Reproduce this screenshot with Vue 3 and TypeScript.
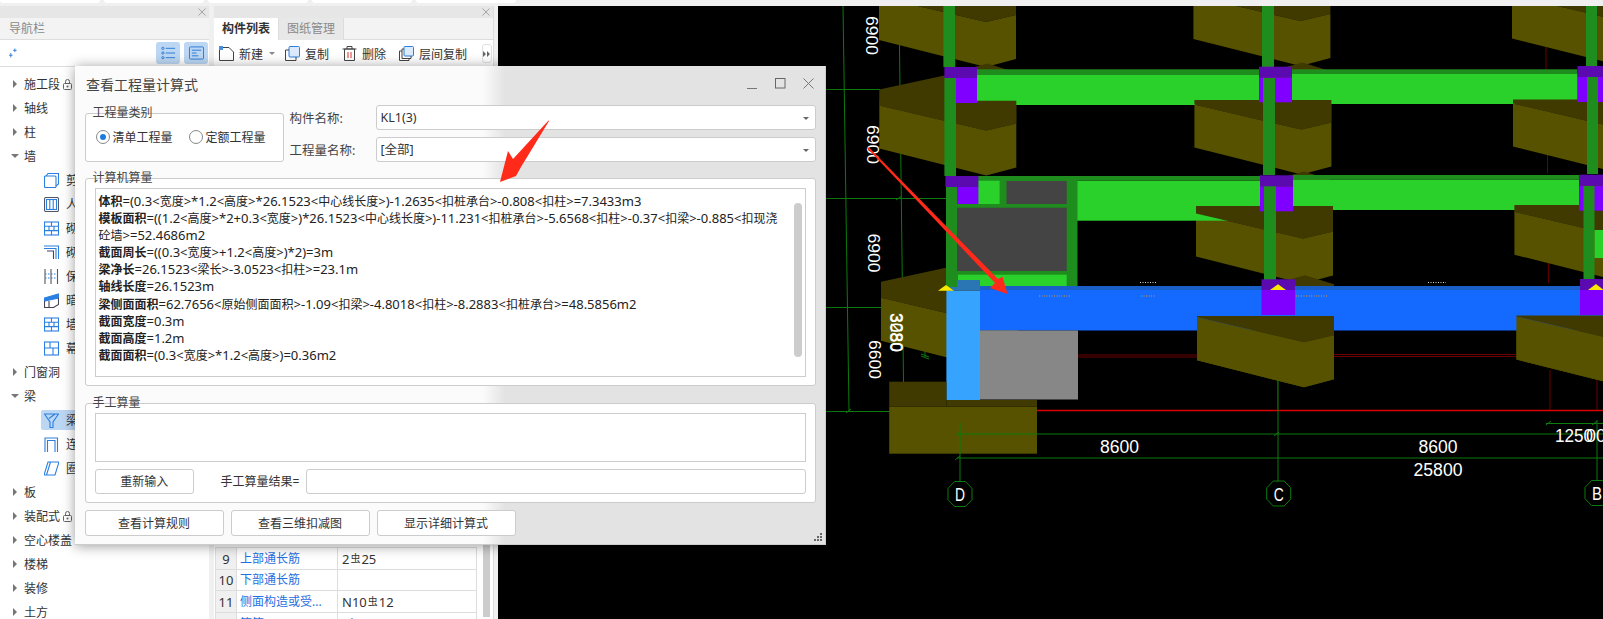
<script setup lang="ts">
interface TreeItem {
  label: string;
  level: 0 | 1;
  arrow?: "open" | "closed";
  lock?: boolean;
  icon?: string;
  active?: boolean;
}

const tree: TreeItem[] = [
  { label: "施工段", level: 0, arrow: "closed", lock: true },
  { label: "轴线", level: 0, arrow: "closed" },
  { label: "柱", level: 0, arrow: "closed" },
  { label: "墙", level: 0, arrow: "open" },
  { label: "剪力墙", level: 1, icon: "box" },
  { label: "人防门框墙", level: 1, icon: "door" },
  { label: "砌体墙", level: 1, icon: "brick" },
  { label: "砌体加筋", level: 1, icon: "rebar" },
  { label: "保温墙", level: 1, icon: "dots" },
  { label: "暗梁", level: 1, icon: "half" },
  { label: "墙垛", level: 1, icon: "brick" },
  { label: "幕墙", level: 1, icon: "grid" },
  { label: "门窗洞", level: 0, arrow: "closed" },
  { label: "梁", level: 0, arrow: "open" },
  { label: "梁", level: 1, icon: "beam", active: true },
  { label: "连梁", level: 1, icon: "arch" },
  { label: "圈梁", level: 1, icon: "slant" },
  { label: "板", level: 0, arrow: "closed" },
  { label: "装配式", level: 0, arrow: "closed", lock: true },
  { label: "空心楼盖", level: 0, arrow: "closed" },
  { label: "楼梯", level: 0, arrow: "closed" },
  { label: "装修", level: 0, arrow: "closed" },
  { label: "土方", level: 0, arrow: "closed" },
];

const rows = [
  { no: 9, name: "上部通长筋", pre: "2", post: "25" },
  { no: 10, name: "下部通长筋", pre: "", post: "" },
  { no: 11, name: "侧面构造或受...", pre: "N10", post: "12" },
  { no: 12, name: "箍筋", pre: "(", post: "6)" },
];

const formulas = [
  ["体积", "=(0.3<宽度>*1.2<高度>*26.1523<中心线长度>)-1.2635<扣桩承台>-0.808<扣柱>=7.3433m3"],
  ["模板面积", "=((1.2<高度>*2+0.3<宽度>)*26.1523<中心线长度>)-11.231<扣桩承台>-5.6568<扣柱>-0.37<扣梁>-0.885<扣现浇砼墙>=52.4686m2"],
  ["截面周长", "=((0.3<宽度>+1.2<高度>)*2)=3m"],
  ["梁净长", "=26.1523<梁长>-3.0523<扣柱>=23.1m"],
  ["轴线长度", "=26.1523m"],
  ["梁侧面面积", "=62.7656<原始侧面面积>-1.09<扣梁>-4.8018<扣柱>-8.2883<扣桩承台>=48.5856m2"],
  ["截面宽度", "=0.3m"],
  ["截面高度", "=1.2m"],
  ["截面面积", "=(0.3<宽度>*1.2<高度>)=0.36m2"],
];

// digits and signs are set a bit larger than the cjk runs, like the hinted font in the original
const cjk = /[\u4e00-\u9fff]/;
const runs = (s: string) =>
  s
    .split(/([\u4e00-\u9fff]+)/)
    .filter(Boolean)
    .map((t) => ({ t, latin: !cjk.test(t) }));

// pile caps on the 3d canvas: lx = left edge, ly = front left corner, flat = where the beam cuts the top face
const caps = [
  { lx: 879, ly: -3 },
  { lx: 1193.4, ly: -4 },
  { lx: 1512, ly: -4.6 },
  { lx: 879.3, ly: 105.5, flat: 100.7 },
  { lx: 1194.4, ly: 104.5, flat: 100 },
  { lx: 1513, ly: 103.4, flat: 99.5 },
  { lx: 1196, ly: 213.5, flat: 206 },
  { lx: 1514.4, ly: 211.7, flat: 205 },
  { lx: 881, ly: 297.7 },
  { lx: 1197, ly: 317.3, flat: 316 },
  { lx: 1516.4, ly: 316.5, flat: 315.5 },
];

const pts = (lx: number, ly: number, list: number[][]) =>
  list.map(([x, y]) => `${lx + x},${ly + y}`).join(" ");

const capBack = (c: { lx: number; ly: number }) =>
  pts(c.lx, c.ly, [[0, 0], [0, -16], [65, -30], [108, -42], [137, -33], [137, 18], [107, 25]]);
const capLight = (c: { lx: number; ly: number }) =>
  pts(c.lx, c.ly, [[0, 0], [107, 25], [137, 18], [137, 62], [107, 70], [0, 43]]);
const capFront = (c: { lx: number; ly: number; flat?: number }) =>
  c.flat === undefined
    ? ""
    : pts(c.lx, 0, [[0, c.flat], [137, c.flat], [137, c.ly + 18], [107, c.ly + 25], [0, c.ly]]);

const beams = [
  { x: 977, w: 282, top: 69.3, mid: 75, bottom: 105 },
  { x: 1292, w: 285.5, top: 69.3, mid: 74, bottom: 104 },
  { x: 1076.5, w: 184, top: 176, mid: 180.7, bottom: 220.7 },
  { x: 1293, w: 286, top: 175, mid: 179.5, bottom: 210 },
];

const columns = [
  [943.4, 6, 11.6, 61], [944.4, 78, 11.6, 98], [946, 187, 11, 100],
  [1262, 6, 12, 61], [1263, 78, 12, 97], [1264, 186, 12, 94],
  [1586, 6, 11, 60], [1587, 77, 11, 97], [1583.5, 186, 11, 94],
];

const purple = [
  { x: 955, w: 22, y: 78, h: 25, dx: 944.4, dw: 32.6, dy: 67 },
  { x: 1259, w: 33, y: 77.3, h: 25, dx: 1259, dw: 33, dy: 66.7 },
  { x: 1577.5, w: 26, y: 77, h: 25, dx: 1577.5, dw: 26, dy: 66 },
  { x: 956.7, w: 21.7, y: 187, h: 17, dx: 945.4, dw: 33, dy: 176 },
  { x: 1260, w: 33, y: 186.3, h: 25, dx: 1260, dw: 33, dy: 175.3 },
  { x: 1579, w: 24, y: 185.7, h: 25, dx: 1579, dw: 24, dy: 174.7 },
  { x: 1261.5, w: 33.5, y: 290, h: 25, dx: 1261.5, dw: 33.5, dy: 279.3 },
  { x: 1580, w: 23, y: 290, h: 25, dx: 1580, dw: 23, dy: 279 },
];

const vertDims = [
  { x: 872, y: 16, t: "6900" },
  { x: 873, y: 125, t: "6900" },
  { x: 873.5, y: 233.5, t: "6900" },
  { x: 875, y: 340, t: "6600" },
  { x: 896, y: 313, t: "3080" },
  { x: 896.5, y: 313, t: "3280" },
];

const octagon = (cx: number, cy: number) => {
  const a = 12;
  const b = 12.5;
  return [[-a * 0.45, -b], [a * 0.45, -b], [a, -b * 0.45], [a, b * 0.45], [a * 0.45, b], [-a * 0.45, b], [-a, b * 0.45], [-a, -b * 0.45]]
    .map(([x, y]) => `${cx + x},${cy + y}`)
    .join(" ");
};

const axes = [
  { x: 960, y: 494, t: "D" },
  { x: 1278.7, y: 493.5, t: "C" },
  { x: 1597, y: 493, t: "B" },
];
</script>

<template>
  <div class="page">
    <div class="topstrip">
      <span v-for="n in 5" :key="n" class="toptab"></span>
    </div>

    <div class="main">
      <aside class="panel nav">
        <div class="panel-bar">
          <svg class="x" viewBox="0 0 8 8"><path d="M0.5 0.5l7 7M7.500 0.5l-7 7" stroke="#a5a5a5" /></svg>
        </div>
        <div class="nav-title">导航栏</div>
        <div class="nav-tools">
          <svg class="spark" viewBox="0 0 10 10"><path d="M6.5 0v4M4.5 2h4M2 5v5M0 7.5h4" stroke="#2a78d6" fill="none" /></svg>
          <span class="tool-btn">
            <svg viewBox="0 0 16 14"><g stroke="#2a78d6" fill="none"><circle cx="2" cy="2" r="1.2" /><circle cx="2" cy="7" r="1.2" /><circle cx="2" cy="12" r="1.2" /><path d="M5 2h10M5 7h10M5 12h10" /></g></svg>
          </span>
          <span class="tool-btn">
            <svg viewBox="0 0 16 14"><g stroke="#2a78d6" fill="none"><rect x="0.5" y="0.5" width="15" height="13" rx="1" /><path d="M3 4h10M3 7h5M3 10h7" /></g></svg>
          </span>
        </div>
        <ul class="tree">
          <li v-for="(item, i) in tree" :key="i" class="tree-row" :class="{ child: item.level === 1, active: item.active }">
            <span v-if="item.arrow" class="arrow" :class="item.arrow"></span>
            <span v-if="item.level === 1" class="node-icon">
              <svg viewBox="0 0 15 15" width="15" height="15">
                <g fill="none" stroke="#2a7fe0" stroke-width="1.1">
                  <template v-if="item.icon === 'box'"><rect x="0.5" y="3" width="11.5" height="11.5" rx="1" /><path d="M2 3l2-2.5h10.500v10.5L12 13" /></template>
                  <template v-else-if="item.icon === 'door'"><rect x="0.5" y="0.5" width="14" height="14" rx="1.5" stroke="#556" /><rect x="2.5" y="2.5" width="10" height="10" /><path d="M5.8 2.5v10M9.2 2.5v10" /></template>
                  <template v-else-if="item.icon === 'brick'"><rect x="0.5" y="1" width="14" height="13" /><path d="M0.5 5.3h14M0.5 9.6h14M7.5 1v4.3M5 5.3v4.3M10 5.3v4.3M7.5 9.6V14" /></template>
                  <template v-else-if="item.icon === 'rebar'"><path d="M0 1h14.5v13M0 3.5h12v10.5" /><path d="M3 6h6.500v8" stroke="#445" /></template>
                  <template v-else-if="item.icon === 'dots'"><path d="M1 0v15M7 0v15M13.5 0v15" stroke="#556" /><path d="M1 5h13M1 9h13" stroke-dasharray="1.5 1.5" /></template>
                  <template v-else-if="item.icon === 'half'"><path d="M0.5 5L14.5 1v4L0.5 8z" fill="#2a7fe0" /><path d="M0.5 8v6.5h9l5-3V5M5 8v6.5" stroke="#445" /></template>
                  <template v-else-if="item.icon === 'grid'"><rect x="0.5" y="1" width="14" height="13" /><path d="M0.5 7h14M6 1v6M9 7v7" /></template>
                  <template v-else-if="item.icon === 'beam'"><path d="M0.5 1h14L9 9v5.5H6V9zM5 5.5L11 1" /></template>
                  <template v-else-if="item.icon === 'arch'"><path d="M1 15V1h12.5v14M3.5 15V3.5H11V15" /></template>
                  <template v-else><path d="M4 1h11l-4 13H0zM6.5 1L2.5 14" /></template>
                </g>
              </svg>
            </span>
            <span class="tree-label">{{ item.label }}</span>
            <svg v-if="item.lock" class="lock" viewBox="0 0 9 11"><path d="M2.5 4.5V2.5a2 2 0 0 1 4 0v2" fill="none" stroke="#666" /><rect x="0.5" y="4.5" width="8" height="6" rx="1" fill="none" stroke="#666" /><circle cx="4.5" cy="7.5" r="1" fill="#666" /></svg>
          </li>
        </ul>
      </aside>

      <section class="panel parts">
        <div class="panel-bar">
          <svg class="x" viewBox="0 0 8 8"><path d="M0.5 0.5l7 7M7.500 0.5l-7 7" stroke="#a5a5a5" /></svg>
        </div>
        <div class="tabs">
          <span class="tab on">构件列表</span>
          <span class="tab">图纸管理</span>
        </div>
        <div class="parts-tools">
          <span class="ptool new">
            <svg viewBox="0 0 15 15"><path d="M3 1.5h7l4.5 4.5v8.5h-14V3" fill="none" stroke="#444" /><path d="M0 0h4v4H0z" fill="#4a90e2" /></svg>新建
          </span>
          <span class="caret"></span>
          <span class="ptool">
            <svg viewBox="0 0 15 15"><rect x="4" y="0.5" width="10.5" height="10.5" rx="1" fill="#dcebfb" stroke="#2a7fe0" /><path d="M4 4H0.5v10.5H11V11" fill="none" stroke="#444" /></svg>复制
          </span>
          <span class="ptool">
            <svg viewBox="0 0 14 15"><path d="M0 3h14M2 3h10v11.5H2zM4.5 3V0.5h5V3" fill="none" stroke="#444" /><path d="M5.5 6v6M8.5 6v6" stroke="#d33" /></svg>删除
          </span>
          <span class="ptool">
            <svg viewBox="0 0 15 15"><rect x="5" y="0.5" width="9.5" height="9.5" rx="1" fill="#dcebfb" stroke="#2a7fe0" /><path d="M5 3H3v9.5h9V10M3 5H0.5v9.5H10V12.5" fill="none" stroke="#444" /></svg>层间复制
          </span>
          <span class="more"><svg viewBox="0 0 8 6" width="8" height="6"><path d="M0 0l3 3-3 3zM4 0l3 3-3 3z" fill="#666" /></svg></span>
        </div>
        <div class="table-area">
          <table class="props">
            <colgroup><col class="c1" /><col class="c2" /><col class="c3" /></colgroup>
            <tbody>
              <tr v-for="r in rows" :key="r.no">
                <td class="no">{{ r.no }}</td>
                <td class="name">{{ r.name }}</td>
                <td class="val">{{ r.pre }}<span v-if="r.post" class="rebar">虫</span>{{ r.post }}</td>
              </tr>
            </tbody>
          </table>
          <div class="table-scroll"></div>
        </div>
      </section>

      <div class="canvas">
        <svg viewBox="498 6 1105 613" width="1105" height="613">
          <rect x="498" y="6" width="1105" height="613" fill="#000" />

          <g stroke="#0d7a0d" fill="none">
            <path d="M843 6L849 411M899 6L903.5 382" />
            <path d="M800 89.5H880M800 198.5H946M800 307.5H881M800 411.5H890" />
            <path d="M925 325V357M921 354l8 3M921 356l8 3M846 413l5-4M896 200l6-4" />
          </g>
          <g stroke="#6a0000" fill="none">
            <path d="M955.7 60V67M1546 47V70M1547.5 103V173M1548.4 210V283" />
            <path d="M1078 355H1197M1078 357H1197M1333 354.5H1516M1333 356.5H1516" />
            <path d="M1277.7 380V411M1550 370V410M1597 380V410" />
          </g>
          <path d="M1037 410.5H1603" stroke="#d80000" stroke-width="1.4" />

          <g v-for="(c, i) in caps" :key="'b' + i">
            <polygon :points="capBack(c)" fill="#403a00" />
            <polygon :points="capLight(c)" fill="#565200" />
          </g>

          <g v-for="(b, i) in beams" :key="'m' + i">
            <rect :x="b.x" :y="b.mid" :width="b.w" :height="b.bottom - b.mid" fill="#2ad12a" />
            <rect :x="b.x" :y="b.top" :width="b.w" :height="b.mid - b.top" fill="#1e8d1e" />
          </g>

          <rect x="946" y="176" width="131.5" height="111" fill="#1e8d1e" />
          <rect x="1006.5" y="181" width="60.2" height="23" fill="#444" />
          <rect x="957" y="207.7" width="109.7" height="63.3" fill="#444" />
          <rect x="978" y="180.7" width="21.6" height="23.3" fill="#2ad12a" />
          <rect x="958" y="274.7" width="108.7" height="11.3" fill="#2ad12a" />

          <template v-for="(c, i) in caps" :key="'f' + i">
            <polygon v-if="c.flat !== undefined" :points="capFront(c)" fill="#403a00" />
          </template>

          <rect x="980" y="290" width="623" height="40.5" fill="#1469ff" />
          <rect x="980" y="286" width="623" height="4" fill="#1a5fc8" />
          <rect x="980" y="330.5" width="98" height="69" fill="#878787" />
          <rect x="946.4" y="290.7" width="33.6" height="109.3" fill="#36a4ff" />
          <rect x="946.4" y="280" width="33.6" height="10.7" fill="#2a76b4" />

          <rect x="889.2" y="406.7" width="147.8" height="47" fill="#565200" />
          <rect x="889.2" y="381.7" width="57.2" height="25" fill="#403a00" />
          <rect x="946.4" y="400" width="90.6" height="6.7" fill="#403a00" />

          <template v-for="(c, i) in caps.slice(9)" :key="'r' + i">
            <polygon :points="capLight(c)" fill="#565200" />
            <polygon :points="capFront(c)" fill="#403a00" />
          </template>

          <rect v-for="(p, i) in purple" :key="'p' + i" :x="p.x" :y="p.y" :width="p.w" :height="p.h" fill="#7f00ff" />
          <rect v-for="(c, i) in columns" :key="'c' + i" :x="c[0]" :y="c[1]" :width="c[2]" :height="c[3]" fill="#1e8d1e" />
          <rect x="1594.6" y="230" width="9" height="28" fill="#2ad12a" />
          <rect v-for="(p, i) in purple" :key="'d' + i" :x="p.dx" :y="p.dy" :width="p.dw" :height="p.y - p.dy" fill="#5b0ab0" />

          <polygon points="938,290.7 954,290.7 946,285" fill="#f7e900" />
          <polygon points="1270,290 1286,290 1278,284.3" fill="#f7e900" />
          <polygon points="1588,290 1603.5,290 1596,284" fill="#f7e900" />

          <g stroke-dasharray="1 1.5" fill="none">
            <path d="M1140 282.5H1157M1428 282.5H1446" stroke="#ddd" />
            <path d="M1039 296H1071M1141 296H1155M1296 296H1327" stroke="#d8962a" />
          </g>

          <g stroke="#0d7a0d" fill="none">
            <path d="M957 434H1603M957 458H1603M1546 423.5H1603" />
            <path d="M960 423V482M1278 380V481.5M1597 420V480.5" />
            <path d="M955 436l5-4M955 460l5-4M1274 436l5-4M1546 425l5-4M1592 425l5-4" />
            <polygon v-for="a in axes" :key="a.t" :points="octagon(a.x, a.y)" />
          </g>

          <text v-for="(d, i) in vertDims" :key="'v' + i" class="vt" :transform="`translate(${d.x - 6} ${d.y}) rotate(90)`" textLength="39" lengthAdjust="spacingAndGlyphs">{{ d.t }}</text>
          <text class="dim" x="1119.5" y="453" text-anchor="middle" textLength="39" lengthAdjust="spacingAndGlyphs">8600</text>
          <text class="dim" x="1438" y="452.5" text-anchor="middle" textLength="39" lengthAdjust="spacingAndGlyphs">8600</text>
          <text class="dim" x="1438" y="476" text-anchor="middle" textLength="49" lengthAdjust="spacingAndGlyphs">25800</text>
          <text class="dim" x="1555" y="442" textLength="38" lengthAdjust="spacingAndGlyphs">1250</text>
          <text class="dim" x="1586" y="442" textLength="20" lengthAdjust="spacingAndGlyphs">00</text>
          <text v-for="a in axes" :key="'t' + a.t" class="dim" :x="a.x" :y="a.y + 7" text-anchor="middle" textLength="10" lengthAdjust="spacingAndGlyphs">{{ a.t }}</text>

          <polygon points="867,148 869,147.5 998,279 1002.6,276.7 1007.5,294 990,288 995,283" fill="#ff2a1a" />
        </svg>
      </div>
    </div>

    <div class="dialog">
      <header class="dlg-head">
        <span class="dlg-title">查看工程量计算式</span>
        <span class="win-btns">
          <svg viewBox="0 0 11 11"><path d="M0 10.500h10" stroke="#777" /></svg>
          <svg viewBox="0 0 11 11"><rect x="0.5" y="0.5" width="9.5" height="9.5" fill="none" stroke="#666" /></svg>
          <svg viewBox="0 0 11 11"><path d="M0.5 0.5l10 10M10.5 0.5l-10 10" stroke="#777" /></svg>
        </span>
      </header>

      <div class="dlg-top">
        <div class="group kind">
          <span class="legend">工程量类别</span>
          <div class="radios">
            <label class="radio"><span class="dot on"></span>清单工程量</label>
            <label class="radio"><span class="dot"></span>定额工程量</label>
          </div>
        </div>
        <div class="fields">
          <div class="field"><span class="flabel">构件名称:</span><div class="select">KL1(3)<i></i></div></div>
          <div class="field"><span class="flabel">工程量名称:</span><div class="select">[全部]<i></i></div></div>
        </div>
      </div>

      <div class="group auto">
        <span class="legend">计算机算量</span>
        <div class="formula-box">
          <div class="formula-text">
            <p v-for="f in formulas" :key="f[0]"><b>{{ f[0] }}</b><span v-for="(r, i) in runs(f[1])" :key="i" :class="{ lat: r.latin }">{{ r.t }}</span></p>
          </div>
          <div class="formula-scroll"></div>
        </div>
      </div>

      <div class="group manual">
        <span class="legend">手工算量</span>
        <div class="manual-box"></div>
        <div class="manual-row">
          <button class="btn reset">重新输入</button>
          <span class="mlabel">手工算量结果=</span>
          <div class="minput"></div>
        </div>
      </div>

      <footer class="dlg-foot">
        <button class="btn foot">查看计算规则</button>
        <button class="btn foot">查看三维扣减图</button>
        <button class="btn foot">显示详细计算式</button>
      </footer>

      <svg class="grip" viewBox="0 0 8 8"><path d="M6 0h2v2H6zM3 3h2v2H3zM6 3h2v2H6zM0 6h2v2H0zM3 6h2v2H3zM6 6h2v2H6z" fill="#666" /></svg>

      <svg class="arrow-big" viewBox="0 0 60 62"><polygon points="54,1 26,47 21,56 5,62 13,31 18,39 53.5,0.5" fill="#ff2a1a" /></svg>
    </div>
  </div>
</template>

<style scoped>
.page {
  position: relative;
  width: 1603px;
  height: 619px;
  overflow: hidden;
  background: #f0f0f0;
  font-family: "Noto Sans", "Noto Sans CJK SC", sans-serif;
  font-size: 12px;
  color: #333;
}

.topstrip {
  display: flex;
  gap: 4px;
  height: 6px;
  align-items: flex-start;
}

.toptab {
  width: 100px;
  height: 3px;
  background: #fff;
  border-radius: 0 0 3px 3px;
}

.main {
  display: flex;
  height: 613px;
}

.panel {
  display: flex;
  flex-direction: column;
  background: #fff;
  overflow: hidden;
}

.nav {
  width: 209px;
  margin-right: 5px;
}

.parts {
  width: 279px;
  margin-right: 5px;
  box-shadow: 1px 0 0 #ddd;
}

.panel-bar {
  height: 12px;
  flex: none;
  background: #e6e6e6;
  position: relative;
}

.x {
  position: absolute;
  right: 3px;
  top: 2px;
  width: 8px;
  height: 8px;
}

.nav-title {
  height: 22px;
  flex: none;
  padding-left: 9px;
  line-height: 22px;
  background: #f3f3f3;
  color: #8a8a8a;
  border-bottom: 1px solid #ddd;
  box-sizing: border-box;
}

.nav-tools {
  height: 27px;
  flex: none;
  display: flex;
  align-items: center;
  padding: 0 1px 0 9px;
  gap: 4px;
  border-bottom: 1px solid #ddd;
  box-sizing: border-box;
}

.spark {
  width: 9px;
  height: 10px;
  margin-right: auto;
}

.tool-btn {
  width: 24px;
  height: 22px;
  display: flex;
  align-items: center;
  justify-content: center;
  background: #bcd7f3;
  border-radius: 3px;
}

.tool-btn svg {
  width: 15px;
  height: 14px;
}

.tree {
  list-style: none;
  margin: 5px 0 0;
  padding: 0;
}

.tree-row {
  height: 24px;
  display: flex;
  align-items: center;
  position: relative;
  padding-left: 24px;
  white-space: nowrap;
}

.tree-row.child {
  padding-left: 44px;
}

.tree-row.active::before {
  content: "";
  position: absolute;
  left: 41px;
  top: 2px;
  bottom: 2px;
  width: 60px;
  background: #bcd7f3;
  border-radius: 2px;
}

.arrow {
  position: absolute;
  left: 13px;
  top: 8px;
  width: 0;
  height: 0;
}

.arrow.closed {
  border-left: 4px solid #777;
  border-top: 4px solid transparent;
  border-bottom: 4px solid transparent;
}

.arrow.open {
  left: 11px;
  top: 10px;
  border-top: 4px solid #777;
  border-left: 4px solid transparent;
  border-right: 4px solid transparent;
}

.node-icon {
  width: 15px;
  height: 15px;
  margin-right: 7px;
  position: relative;
}

.node-icon svg {
  display: block;
}

.tree-label {
  position: relative;
}

/* the dialog hides the rest of the child labels */
.child .tree-label {
  max-width: 9px;
  overflow: hidden;
}

.lock {
  width: 9px;
  height: 11px;
  margin-left: 3px;
}

.tabs {
  height: 22px;
  flex: none;
  display: flex;
  background: #f3f3f3;
  border-bottom: 1px solid #ddd;
  box-sizing: border-box;
}

.tab {
  width: 65px;
  height: 22px;
  line-height: 22px;
  text-align: center;
  background: #e8e8e8;
  color: #8a8a8a;
  border-right: 1px solid #ddd;
  box-sizing: border-box;
}

.tab.on {
  background: #fff;
  color: #333;
  font-weight: 700;
}

.parts-tools {
  height: 27px;
  flex: none;
  display: flex;
  align-items: center;
  padding-left: 5px;
  position: relative;
}

.ptool {
  display: flex;
  align-items: center;
  gap: 5px;
  margin-right: 13px;
  white-space: nowrap;
}

.ptool svg {
  width: 15px;
  height: 15px;
}

.ptool.new {
  margin-right: 6px;
}

.caret {
  width: 0;
  height: 0;
  margin-right: 10px;
  border-top: 3px solid #888;
  border-left: 3px solid transparent;
  border-right: 3px solid transparent;
}

.more {
  position: absolute;
  right: 1px;
  top: 4px;
  width: 10px;
  height: 19px;
  border: 1px solid #e0e0e0;
  border-radius: 3px;
  box-sizing: border-box;
  display: flex;
  align-items: center;
  justify-content: center;
}

.table-area {
  flex: none;
  position: relative;
  padding: 480px 0 0 1px;
}

.props {
  width: 262px;
  table-layout: fixed;
  border-collapse: collapse;
}

.c1 { width: 21px; }
.c2 { width: 101px; }

.props td {
  height: 21px;
  padding: 0;
  border: 1px solid #ddd;
  white-space: nowrap;
  overflow: hidden;
  box-sizing: border-box;
  line-height: 20px;
}

.no {
  text-align: center;
  background: #f0f0f0;
  font-size: 13px;
}

.props .name {
  padding-left: 3px;
  color: #1f6fe0;
}

.props .val {
  padding-left: 4px;
  font-size: 13px;
}

.rebar {
  font-size: 10px;
  vertical-align: 2px;
  margin: 0 1px;
}

.table-scroll {
  position: absolute;
  left: 268.5px;
  top: 470px;
  width: 7.5px;
  height: 80px;
  background: #ccc;
}

.canvas {
  flex: none;
  width: 1105px;
  height: 613px;
  background: #000;
}

.canvas svg {
  display: block;
}

.vt {
  font-family: "Liberation Sans", sans-serif;
  font-size: 17px;
  fill: #fff;
}

.dim {
  font-family: "Liberation Sans", sans-serif;
  font-size: 18px;
  fill: #fff;
}

.dialog {
  position: absolute;
  left: 75px;
  top: 66px;
  width: 751px;
  height: 479px;
  box-sizing: border-box;
  padding: 0 9.5px;
  display: flex;
  flex-direction: column;
  background: linear-gradient(90deg, #fbfbfb 0, #fbfbfb 408px, #e3e3e3 430px);
  border-right: 1px solid #ccc;
  border-bottom: 1px solid #ccc;
  box-shadow: 0 1px 12px rgba(0, 0, 0, 0.4);
}

.dlg-head {
  height: 38.5px;
  flex: none;
  display: flex;
  align-items: center;
  justify-content: space-between;
  padding: 0 3px 0 1.5px;
}

.dlg-title {
  font-size: 14px;
  color: #444;
  margin-bottom: 2px;
}

.win-btns {
  display: flex;
  gap: 17px;
  margin-bottom: 4px;
  margin-right: -1px;
}

.win-btns svg {
  width: 11px;
  height: 11px;
}

.dlg-top {
  height: 57px;
  flex: none;
  display: flex;
  margin-bottom: 16.5px;
}

.group {
  position: relative;
  background: #fff;
  border: 1px solid #ccc;
  border-radius: 3px;
  box-sizing: border-box;
  padding: 9px 9px 0;
}

.legend {
  position: absolute;
  left: 7px;
  top: -9px;
  line-height: 16px;
  color: #444;
}

.kind {
  width: 199px;
  margin-top: 8.5px;
  height: 48.5px;
}

.radios {
  display: flex;
  gap: 16px;
  margin-left: 1px;
  margin-top: 5px;
}

.radio {
  display: flex;
  align-items: center;
  gap: 3px;
  white-space: nowrap;
}

.dot {
  width: 14px;
  height: 14px;
  box-sizing: border-box;
  border: 1px solid #888;
  border-radius: 50%;
  background: #fff;
  position: relative;
}

.dot.on::after {
  content: "";
  position: absolute;
  inset: 3px;
  background: #1f7ae0;
  border-radius: 50%;
}

.fields {
  flex: 1;
  display: flex;
  flex-direction: column;
  justify-content: space-between;
  margin-left: 6px;
}

.field {
  display: flex;
  align-items: center;
  height: 25px;
}

.flabel {
  width: 86px;
  flex: none;
  font-size: 12.5px;
  color: #444;
}

.select {
  flex: 1;
  height: 25px;
  box-sizing: border-box;
  position: relative;
  padding-left: 4px;
  line-height: 23px;
  background: #fff;
  border: 1px solid #ccc;
  border-radius: 3px;
  font-size: 12.5px;
}

.select i {
  position: absolute;
  right: 6px;
  top: 11px;
  border-top: 3px solid #666;
  border-left: 3px solid transparent;
  border-right: 3px solid transparent;
}

.auto {
  height: 208px;
  flex: none;
  margin-bottom: 16.7px;
}

.formula-box {
  position: relative;
  height: 189px;
  border: 1px solid #ccc;
  box-sizing: border-box;
  padding: 4px 26px 0 3px;
}

.formula-text p {
  margin: 0;
  font-size: 12px;
  line-height: 17.1px;
  color: #222;
}

.lat {
  font-size: 13px;
}

.formula-scroll {
  position: absolute;
  right: 3px;
  top: 14px;
  width: 8px;
  height: 154px;
  background: #ccc;
  border-radius: 4px;
}

.manual {
  height: 100.6px;
  flex: none;
  margin-bottom: 7px;
}

.manual-box {
  height: 49px;
  border: 1px solid #ccc;
  box-sizing: border-box;
}

.manual-row {
  display: flex;
  align-items: center;
  margin-top: 7px;
  height: 25.4px;
}

.btn {
  height: 25.4px;
  padding: 0;
  background: #fff;
  border: 1px solid #ccc;
  border-radius: 3px;
  font: inherit;
  color: #333;
}

.reset {
  width: 99.4px;
  flex: none;
}

.mlabel {
  margin-left: 26.5px;
  width: 86px;
  flex: none;
  white-space: nowrap;
}

.minput {
  flex: 1;
  height: 25.4px;
  border: 1px solid #ccc;
  border-radius: 3px;
  box-sizing: border-box;
}

.dlg-foot {
  display: flex;
  gap: 7px;
  flex: none;
}

.foot {
  width: 139px;
}

.grip {
  position: absolute;
  right: 3px;
  bottom: 3px;
  width: 8px;
  height: 8px;
}

.arrow-big {
  position: absolute;
  left: 420px;
  top: 54px;
  width: 60px;
  height: 62px;
}
</style>

<style>
html,
body {
  background: #000;
}
</style>
